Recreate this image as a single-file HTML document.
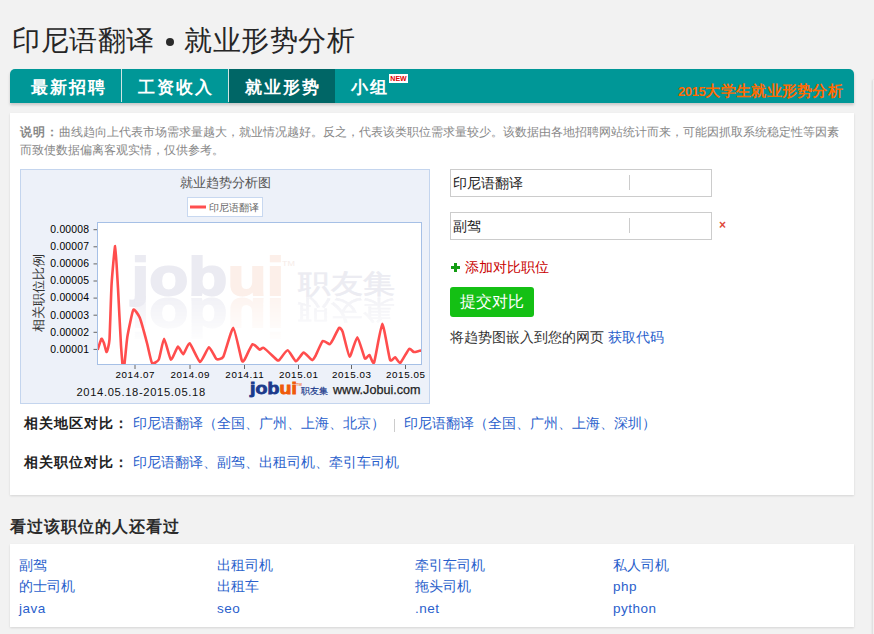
<!DOCTYPE html>
<html><head><meta charset="utf-8">
<style>
*{margin:0;padding:0;box-sizing:border-box}
html,body{width:874px;height:634px;overflow:hidden;background:#f2f2f2;font-family:"Liberation Sans",sans-serif;color:#333}
.a{position:absolute;white-space:nowrap}
#title{left:12px;top:23px;font-size:28px;line-height:36px;color:#262626;letter-spacing:0.6px}
#nav{left:10px;top:69px;width:844px;height:34px;background:#009797;border-radius:5px 5px 0 0;box-shadow:0 2px 3px rgba(0,0,0,.18)}
.tab{top:2px;height:34px;font-size:17px;font-weight:bold;color:#fff;line-height:34px;letter-spacing:2px}
.sep{top:0;width:1px;height:33px;background:#d2e4e3}
#panel{left:10px;top:113px;width:844px;height:382px;background:#fff;box-shadow:0 1px 2px rgba(0,0,0,.12)}
.desc{font-size:12px;line-height:18px;color:#888}
.link{color:#2a5fcc}
#panel2{left:10px;top:544px;width:844px;height:83px;background:#fff;box-shadow:0 1px 2px rgba(0,0,0,.12)}
.ln{font-size:14px;line-height:21px;color:#2a5fcc;top:555px !important}
</style></head><body>
<div class="a" id="title">印尼语翻译<span style="display:inline-block;width:8px;height:8px;border-radius:50%;background:#2b2b2b;margin:0 10px 0 11px;vertical-align:middle;position:relative;top:-1px"></span>就业形势分析</div>

<div class="a" id="nav">
  <div class="a tab" style="left:21px">最新招聘</div>
  <div class="a sep" style="left:111px"></div>
  <div class="a tab" style="left:128px">工资收入</div>
  <div class="a sep" style="left:218px"></div>
  <div class="a" style="left:219px;top:0;width:106px;height:34px;background:#006666"></div>
  <div class="a tab" style="left:235px">就业形势</div>
  <div class="a tab" style="left:341px">小组</div>
  <div class="a" style="left:379px;top:5px;width:19px;height:9px;background:#fff;color:#d00;font-size:7px;font-weight:bold;line-height:9px;text-align:center">NEW</div>
  <div class="a" style="left:668px;top:14px;font-size:15px;line-height:15px;font-weight:bold;color:#ff6a00;letter-spacing:0.3px"><span style="font-size:13px;letter-spacing:-0.4px">2015</span>大学生就业形势分析</div>
</div>

<div class="a" id="panel"></div>

<div class="a desc" style="left:20px;top:123px;width:826px;white-space:normal"><b style="letter-spacing:1px">说明：</b>曲线趋向上代表市场需求量越大，就业情况越好。反之，代表该类职位需求量较少。该数据由各地招聘网站统计而来，可能因抓取系统稳定性等因素而致使数据偏离客观实情，仅供参考。</div>

<!-- CHART -->
<svg class="a" style="left:20px;top:169px" width="411" height="235" viewBox="20 169 411 235" font-family="Liberation Sans, sans-serif">
<rect x="20.5" y="169.5" width="409" height="234" fill="#edf1f9" stroke="#c4d5ee"/>
<text x="225" y="187" font-size="13" fill="#555" text-anchor="middle">就业趋势分析图</text>
<rect x="187.5" y="197.5" width="75" height="19" fill="#fff" stroke="#c8d8f0"/>
<line x1="190" y1="207" x2="206" y2="207" stroke="#ff4f4f" stroke-width="3"/>
<text x="209" y="211" font-size="10" fill="#666">印尼语翻译</text>
<rect x="97.5" y="222.5" width="324" height="142" fill="#fff" stroke="#a6c0e6"/>
<defs><linearGradient id="fg" x1="0" y1="0" x2="0" y2="1"><stop offset="0" stop-color="#fff" stop-opacity="0.7"/><stop offset="1" stop-color="#fff" stop-opacity="0"/></linearGradient><mask id="fm" maskUnits="userSpaceOnUse" x="98" y="296" width="323" height="50"><rect x="98" y="296" width="323" height="50" fill="url(#fg)"/></mask></defs>
<g><g transform="translate(0,295) scale(1,0.84) translate(0,-295)"><text x="131.5" y="295" font-size="64" font-weight="bold" fill="#ebebf2" stroke="#ebebf2" stroke-width="2.2">job<tspan fill="#fcefe9" stroke="#fcefe9">ui</tspan></text><text x="298.5" y="293" font-size="32" fill="#ececf2" stroke="#ececf2" stroke-width="0.7">职友集</text><text x="282" y="260" font-size="9" fill="#f6ece8">TM</text></g></g>
<g mask="url(#fm)"><g transform="translate(0,594) scale(1,-1)"><g transform="translate(0,295) scale(1,0.84) translate(0,-295)"><text x="131.5" y="295" font-size="64" font-weight="bold" fill="#ebebf2" stroke="#ebebf2" stroke-width="2.2">job<tspan fill="#fcefe9" stroke="#fcefe9">ui</tspan></text><text x="298.5" y="293" font-size="32" fill="#ececf2" stroke="#ececf2" stroke-width="0.7">职友集</text></g></g></g>
<clipPath id="pc"><rect x="98" y="223" width="323" height="141"/></clipPath>
<path clip-path="url(#pc)" d="M97.6,349.9 C97.9,349.0 100.9,339.4 101.4,338.8 C101.9,338.2 103.5,341.9 103.9,343.0 C104.3,344.1 106.2,352.3 106.7,352.0 C107.2,351.7 109.1,345.0 109.5,339.3 C109.9,333.6 111.1,291.8 111.6,284.0 C112.1,276.2 114.7,245.7 115.2,246.0 C115.7,246.3 117.5,279.9 118.0,288.2 C118.5,296.5 120.5,338.6 121.0,345.6 C121.5,352.6 123.0,372.7 123.5,372.0 C124.0,371.3 126.5,342.3 127.3,337.1 C128.1,331.9 132.3,311.5 133.3,309.9 C134.3,308.3 138.5,314.8 139.7,317.6 C140.8,320.4 146.1,339.7 147.1,343.5 C148.1,347.3 151.0,361.7 152.0,363.0 C153.0,364.3 157.8,361.5 158.8,359.5 C159.8,357.5 163.1,338.8 164.1,338.8 C165.1,338.8 169.8,359.1 170.9,359.7 C172.1,360.3 176.9,347.1 177.9,346.6 C178.9,346.2 182.3,354.6 183.3,354.3 C184.3,354.0 188.2,342.7 189.6,343.3 C191.0,343.9 198.5,361.7 200.1,362.0 C201.7,362.3 207.6,347.6 209.0,347.3 C210.4,347.1 215.2,358.2 216.4,359.0 C217.6,359.8 222.0,359.2 223.4,356.6 C224.8,354.0 231.8,327.6 233.3,327.9 C234.8,328.2 240.8,357.5 241.7,360.1 C242.6,362.8 243.6,361.0 244.5,359.7 C245.4,358.4 251.3,345.0 252.6,344.2 C253.9,343.4 258.7,349.3 259.6,349.6 C260.5,349.9 262.4,347.1 263.9,348.0 C265.4,348.9 275.9,359.1 277.2,360.1 C278.5,361.1 278.6,360.5 279.5,359.7 C280.4,358.9 286.3,350.2 287.7,350.3 C289.1,350.4 294.6,361.1 295.9,361.3 C297.2,361.5 302.2,352.7 303.6,352.6 C305.0,352.5 311.2,359.9 312.2,360.1 C313.2,360.3 314.8,357.1 315.7,355.5 C316.6,353.9 321.5,341.9 322.7,341.0 C323.9,340.1 328.8,344.4 329.7,344.2 C330.6,344.0 332.4,340.5 333.2,339.1 C334.0,337.7 338.3,328.5 339.1,327.9 C339.9,327.3 341.7,329.2 342.6,331.6 C343.5,334.0 348.4,356.1 349.6,356.6 C350.8,357.1 356.0,337.1 357.3,337.2 C358.6,337.3 363.8,356.8 364.8,358.3 C365.8,359.8 368.6,354.6 369.4,355.0 C370.2,355.4 373.0,365.1 374.1,362.5 C375.2,359.9 381.0,324.1 382.3,323.9 C383.6,323.7 388.9,356.9 390.0,359.7 C391.1,362.5 394.2,357.0 395.1,357.3 C396.0,357.6 399.1,363.6 400.3,362.9 C401.5,362.2 408.0,349.8 409.1,348.9 C410.2,348.0 412.9,351.8 413.8,352.0 C414.7,352.2 418.9,350.9 419.6,350.8 C420.3,350.7 421.8,350.5 422.0,350.5" fill="none" stroke="#ff4d4d" stroke-width="2.6" stroke-linejoin="round"/>
<line x1="93.5" y1="229.7" x2="97" y2="229.7" stroke="#666" stroke-width="1"/>
<text x="89.3" y="233.0" font-size="10.4" fill="#000" text-anchor="end" letter-spacing="0.2">0.00008</text>
<line x1="93.5" y1="246.8" x2="97" y2="246.8" stroke="#666" stroke-width="1"/>
<text x="89.3" y="250.1" font-size="10.4" fill="#000" text-anchor="end" letter-spacing="0.2">0.00007</text>
<line x1="93.5" y1="263.9" x2="97" y2="263.9" stroke="#666" stroke-width="1"/>
<text x="89.3" y="267.2" font-size="10.4" fill="#000" text-anchor="end" letter-spacing="0.2">0.00006</text>
<line x1="93.5" y1="281.0" x2="97" y2="281.0" stroke="#666" stroke-width="1"/>
<text x="89.3" y="284.3" font-size="10.4" fill="#000" text-anchor="end" letter-spacing="0.2">0.00005</text>
<line x1="93.5" y1="298.1" x2="97" y2="298.1" stroke="#666" stroke-width="1"/>
<text x="89.3" y="301.4" font-size="10.4" fill="#000" text-anchor="end" letter-spacing="0.2">0.00004</text>
<line x1="93.5" y1="315.2" x2="97" y2="315.2" stroke="#666" stroke-width="1"/>
<text x="89.3" y="318.5" font-size="10.4" fill="#000" text-anchor="end" letter-spacing="0.2">0.00003</text>
<line x1="93.5" y1="332.3" x2="97" y2="332.3" stroke="#666" stroke-width="1"/>
<text x="89.3" y="335.6" font-size="10.4" fill="#000" text-anchor="end" letter-spacing="0.2">0.00002</text>
<line x1="93.5" y1="349.4" x2="97" y2="349.4" stroke="#666" stroke-width="1"/>
<text x="89.3" y="352.7" font-size="10.4" fill="#000" text-anchor="end" letter-spacing="0.2">0.00001</text>
<line x1="135.0" y1="365" x2="135.0" y2="369" stroke="#666" stroke-width="1"/>
<text x="135.3" y="378.3" font-size="9.8" fill="#000" text-anchor="middle" letter-spacing="0.6">2014.07</text>
<line x1="190.0" y1="365" x2="190.0" y2="369" stroke="#666" stroke-width="1"/>
<text x="190.3" y="378.3" font-size="9.8" fill="#000" text-anchor="middle" letter-spacing="0.6">2014.09</text>
<line x1="244.5" y1="365" x2="244.5" y2="369" stroke="#666" stroke-width="1"/>
<text x="244.8" y="378.3" font-size="9.8" fill="#000" text-anchor="middle" letter-spacing="0.6">2014.11</text>
<line x1="298.5" y1="365" x2="298.5" y2="369" stroke="#666" stroke-width="1"/>
<text x="298.8" y="378.3" font-size="9.8" fill="#000" text-anchor="middle" letter-spacing="0.6">2015.01</text>
<line x1="351.5" y1="365" x2="351.5" y2="369" stroke="#666" stroke-width="1"/>
<text x="351.8" y="378.3" font-size="9.8" fill="#000" text-anchor="middle" letter-spacing="0.6">2015.03</text>
<line x1="405.5" y1="365" x2="405.5" y2="369" stroke="#666" stroke-width="1"/>
<text x="405.8" y="378.3" font-size="9.8" fill="#000" text-anchor="middle" letter-spacing="0.6">2015.05</text>
<text x="38" y="293" font-size="13" fill="#333" text-anchor="middle" transform="rotate(-90 38 293)" dominant-baseline="central">相关职位比例</text>
<text x="76.5" y="395.8" font-size="11.2" fill="#111" letter-spacing="0.65">2014.05.18-2015.05.18</text>
<g transform="translate(0,394.5) scale(1,0.83) translate(0,-394.5)"><text x="250" y="394.5" font-size="19.5" font-weight="bold" fill="#1b3a8c" stroke="#1b3a8c" stroke-width="1" letter-spacing="0.1">job<tspan fill="#f05a0a" stroke="#f05a0a">ui</tspan></text></g>
<text x="296" y="385.5" font-size="4" font-weight="bold" fill="#f08050">TM</text>
<text x="300.5" y="393.6" font-size="9.4" fill="#1b3a8c" stroke="#1b3a8c" stroke-width="0.2">职友集</text>
<text x="333" y="394.3" font-size="12.6" fill="#222" stroke="#222" stroke-width="0.25">www.Jobui.com</text>
</svg>

<!-- FORM -->
<div class="a" style="left:450px;top:169px;width:262px;height:28px;border:1px solid #ccc;background:#fff"></div>
<div class="a" style="left:453px;top:173px;font-size:14px;line-height:20px;color:#222">印尼语翻译</div>
<div class="a" style="left:629px;top:175px;width:1px;height:15px;background:#ccc"></div>
<div class="a" style="left:450px;top:212px;width:262px;height:28px;border:1px solid #ccc;background:#fff"></div>
<div class="a" style="left:453px;top:216px;font-size:14px;line-height:20px;color:#222">副驾</div>
<div class="a" style="left:629px;top:218px;width:1px;height:15px;background:#ccc"></div>
<div class="a" style="left:719px;top:219px;font-size:12px;line-height:12px;color:#e04a3a;font-weight:bold">×</div>

<div class="a" style="left:451px;top:266px;width:9px;height:3px;background:#139c13"></div><div class="a" style="left:454px;top:263px;width:3px;height:9px;background:#139c13"></div>
<div class="a" style="left:465px;top:257px;font-size:14px;line-height:20px;color:#c80000">添加对比职位</div>
<div class="a" style="left:450px;top:287px;width:84px;height:30px;background:#14c014;border-radius:3px;color:#fff;font-size:16px;line-height:30px;text-align:center">提交对比</div>
<div class="a" style="left:450px;top:327px;font-size:14px;line-height:20px;color:#333">将趋势图嵌入到您的网页 <span class="link">获取代码</span></div>

<div class="a" style="left:24px;top:413px;font-size:14px;line-height:20px;color:#222;font-weight:bold;letter-spacing:1px">相关地区对比：</div>
<div class="a link" style="left:133px;top:413px;font-size:14px;line-height:20px">印尼语翻译（全国、广州、上海、北京）</div>
<div class="a" style="left:394px;top:419px;width:1px;height:13px;background:#ccc"></div>
<div class="a link" style="left:404px;top:413px;font-size:14px;line-height:20px">印尼语翻译（全国、广州、上海、深圳）</div>
<div class="a" style="left:24px;top:452px;font-size:14px;line-height:20px;color:#222;font-weight:bold;letter-spacing:1px">相关职位对比：</div>
<div class="a link" style="left:133px;top:452px;font-size:14px;line-height:20px">印尼语翻译、副驾、出租司机、牵引车司机</div>

<div class="a" style="left:10px;top:516px;font-size:16px;line-height:22px;color:#2b2b2b;font-weight:bold;letter-spacing:1px">看过该职位的人还看过</div>
<div class="a" id="panel2"></div>
<div class="a ln" style="left:19px;top:554px">副驾<br>的士司机<br><span style="font-size:13.5px;letter-spacing:0.5px;position:relative;top:1px">java</span></div>
<div class="a ln" style="left:217px;top:554px">出租司机<br>出租车<br><span style="font-size:13.5px;letter-spacing:0.5px;position:relative;top:1px">seo</span></div>
<div class="a ln" style="left:415px;top:554px">牵引车司机<br>拖头司机<br><span style="font-size:13.5px;letter-spacing:0.5px;position:relative;top:1px">.net</span></div>
<div class="a ln" style="left:613px;top:554px">私人司机<br><span style="font-size:13.5px;letter-spacing:0.5px">php</span><br><span style="font-size:13.5px;letter-spacing:0.5px;position:relative;top:1px">python</span></div>
<div class="a" style="left:873px;top:80px;width:10px;height:560px;background:#f2f2f2;box-shadow:-1px 0 2px rgba(0,0,0,.10)"></div>
</body></html>
